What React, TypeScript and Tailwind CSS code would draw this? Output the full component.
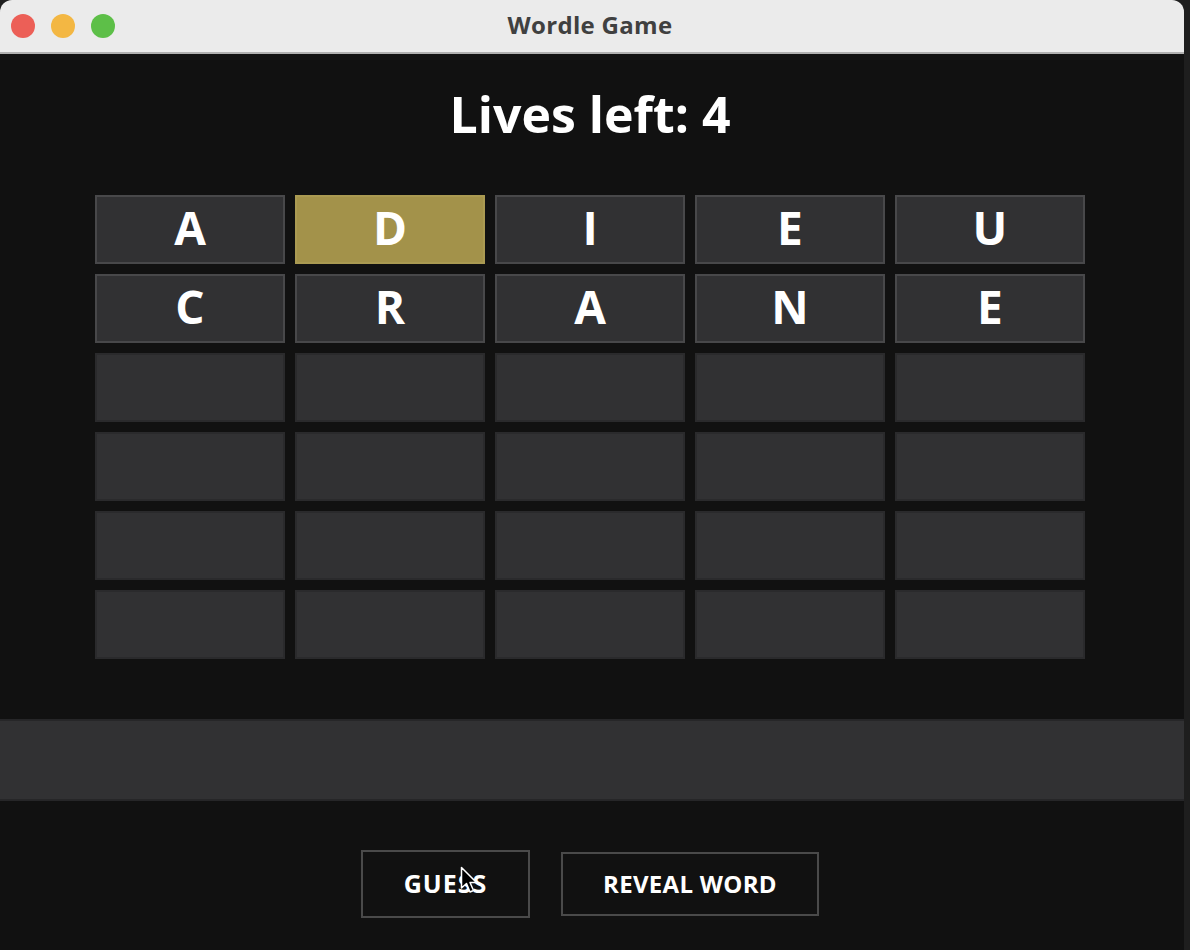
import React from "react";

const rows: string[][] = [
  ["A", "D", "I", "E", "U"],
  ["C", "R", "A", "N", "E"],
  ["", "", "", "", ""],
  ["", "", "", "", ""],
  ["", "", "", "", ""],
  ["", "", "", "", ""],
];

function Cell({ letter, present }: { letter: string; present: boolean }) {
  if (present) {
    return (
      <div className="w-[190px] h-[69px] bg-[#a3924a] border-2 border-[#aa9a52] flex items-center justify-center pb-[5px] text-white font-bold text-[46px] leading-none">
        {letter}
      </div>
    );
  }
  if (letter) {
    return (
      <div className="w-[190px] h-[69px] bg-[#313133] border-2 border-[#48484a] flex items-center justify-center pb-[5px] text-white font-bold text-[46px] leading-none">
        {letter}
      </div>
    );
  }
  return <div className="w-[190px] h-[69px] bg-[#313133] border-2 border-[#2a2a2c]" />;
}

export default function App() {
  return (
    <div
      className="w-[1190px] h-[950px] flex bg-[#1e1e1e] overflow-hidden"
      style={{ fontFamily: '"Open Sans", "Noto Sans", sans-serif' }}
    >
      <div className="w-[1184px] h-full flex flex-col rounded-t-[12px] overflow-hidden bg-[#111111]">
        <div className="h-[54px] shrink-0 bg-[#ebebeb] border-b-2 border-[#b0b0b0] flex items-center relative">
          <div className="flex gap-[16px] pl-[11px]">
            <div className="w-[24px] h-[24px] rounded-full bg-[#ec5f57]" />
            <div className="w-[24px] h-[24px] rounded-full bg-[#f3b743]" />
            <div className="w-[24px] h-[24px] rounded-full bg-[#5dbf48]" />
          </div>
          <div className="absolute inset-0 flex items-center justify-center pr-[4px] pb-[2px] text-[24px] font-bold tracking-[0.3px] text-[#404040]">
            Wordle Game
          </div>
        </div>
        <div className="flex-1 flex flex-col">
          <div className="pt-[27px] h-[141px] flex justify-center pr-[4px]">
            <div className="text-white font-bold text-[50px] leading-[66px]">Lives left: 4</div>
          </div>
          <div className="pl-[95px] flex flex-col gap-[10px]">
            {rows.map((r, i) => (
              <div key={i} className="flex gap-[10px]">
                {r.map((l, j) => (
                  <Cell key={j} letter={l} present={i === 0 && j === 1} />
                ))}
              </div>
            ))}
          </div>
          <div className="mt-[60px] h-[82px] bg-[#313133] border-y-2 border-[#262628]" />
          <div className="mt-[49px] pl-[361px] flex items-center gap-[31px] relative">
            <div className="w-[169px] h-[68px] border-2 border-[#4a4a4a] flex items-center justify-center text-white font-bold text-[25px] tracking-[1px]">
              GUESS
            </div>
            <div className="w-[258px] h-[64px] border-2 border-[#4a4a4a] flex items-center justify-center text-white font-bold text-[24px] tracking-[0.3px]">
              REVEAL WORD
            </div>
            <svg
              className="absolute left-[460px] top-[16px]"
              width="20"
              height="30"
              viewBox="0 0 20 30"
            >
              <path
                d="M1.5 1.5 L1.5 22 L6.5 17.5 L10 26 L13.5 24.5 L10 16.5 L16.5 16.5 Z"
                fill="#000"
                stroke="#fff"
                strokeWidth="1.5"
                strokeLinejoin="round"
              />
            </svg>
          </div>
        </div>
      </div>
      <div className="w-[6px] h-full bg-[#1e1e1e]" />
    </div>
  );
}
